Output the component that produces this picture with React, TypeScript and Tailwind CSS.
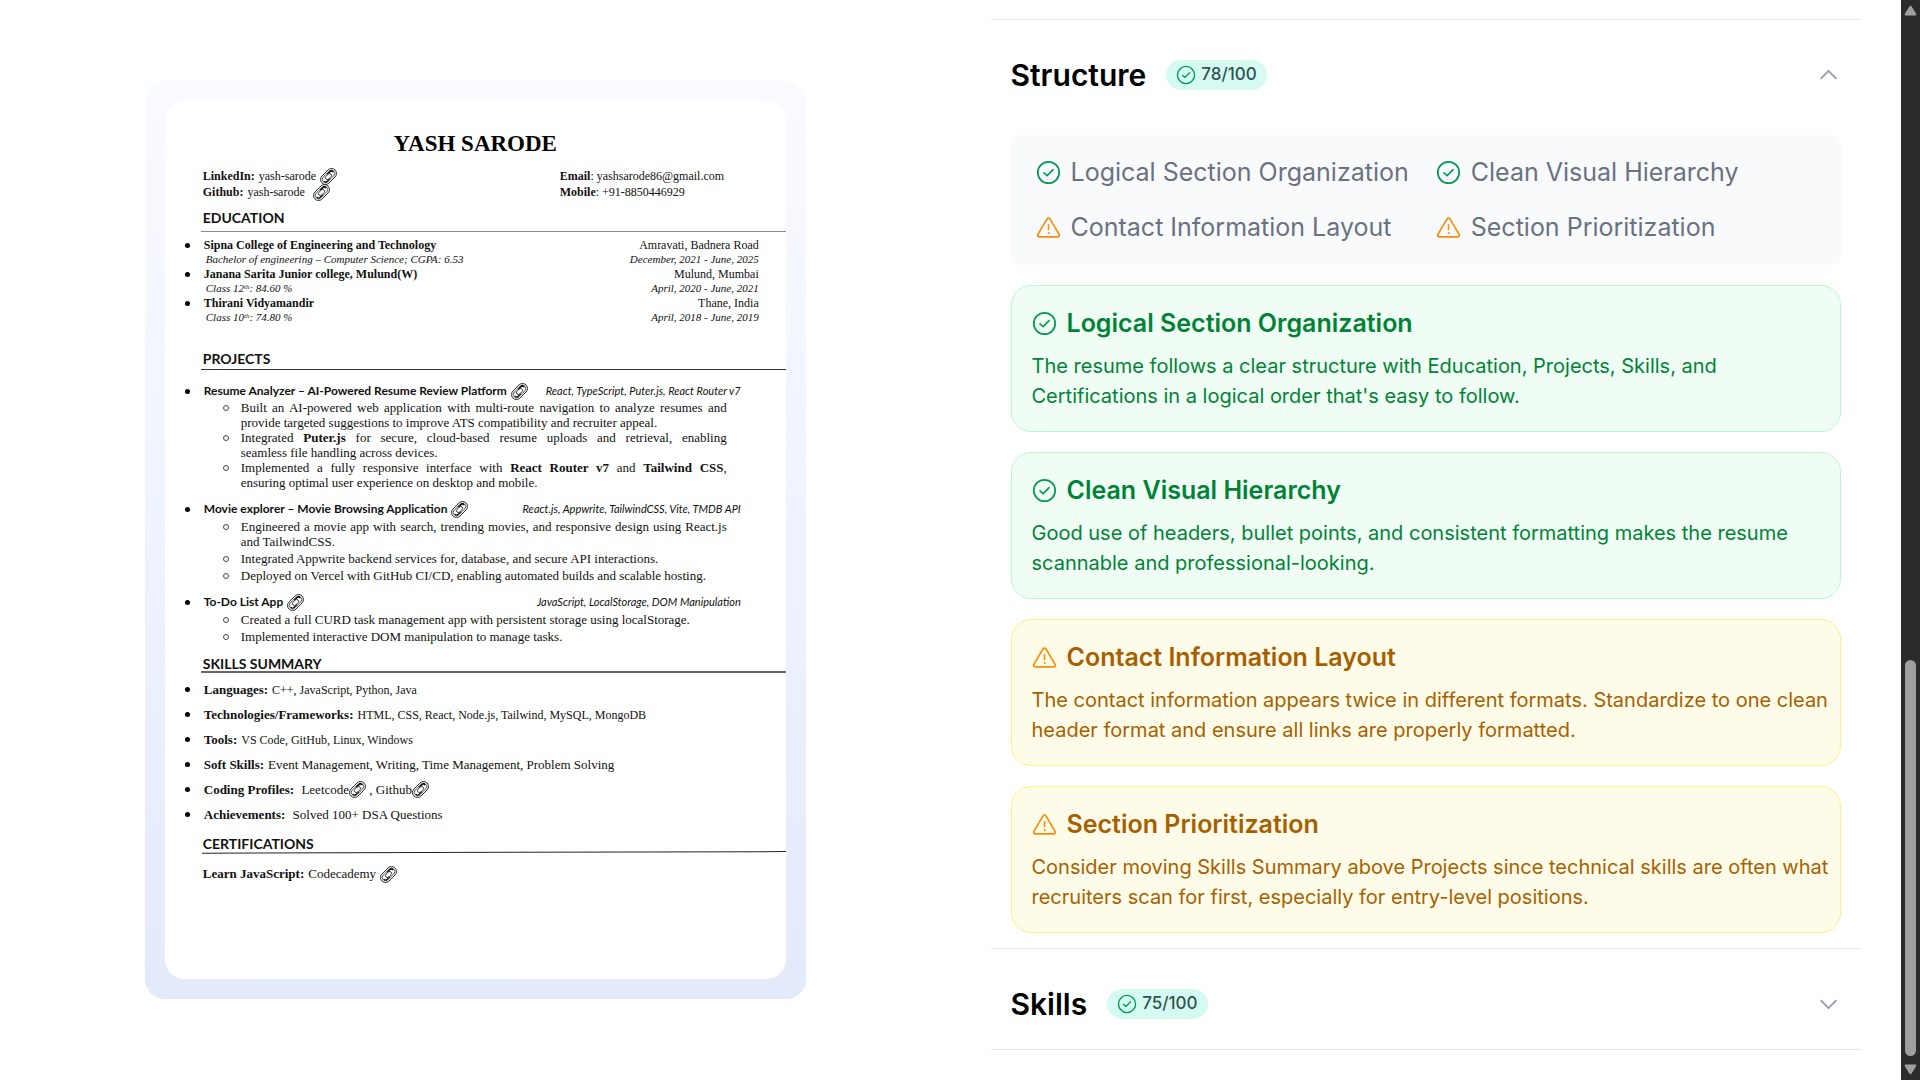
import { Fragment, useState, type ReactNode } from 'react';

function CheckIcon({ className }: { className: string }) {
  return (
    <svg viewBox="0 0 25 25" fill="none" stroke="#009a55" strokeLinecap="round" strokeLinejoin="round" className={className} aria-hidden="true">
      <circle cx="12.5" cy="12.5" r="10.7" strokeWidth="1.7" />
      <path d="M8 12.9l3.1 2.7 6-6" strokeWidth="1.6" />
    </svg>
  );
}

function WarningIcon({ className }: { className: string }) {
  return (
    <svg viewBox="0 0 25 25" fill="none" stroke="#fb8c0a" strokeLinecap="round" strokeLinejoin="round" className={className} aria-hidden="true">
      <path d="M10.9 4.1 1.9 19.4c-.7 1.2 0 2.4 1.4 2.4h18.4c1.4 0 2.1-1.2 1.4-2.4L14.1 4.1c-.7-1.3-2.5-1.3-3.2 0Z" strokeWidth="1.7" />
      <path d="M12.5 9.8v4.8" strokeWidth="1.6" />
      <circle cx="12.5" cy="18.1" r=".5" fill="#fb8c0a" strokeWidth="1" />
    </svg>
  );
}

function Chevron({ open }: { open: boolean }) {
  return (
    <svg viewBox="0 0 25 25" fill="none" stroke="#98a2b3" strokeWidth="2" strokeLinecap="round" strokeLinejoin="round" className="size-[25px] shrink-0" aria-hidden="true">
      <path d={open ? 'M5.2 15.2l7.3-7.3 7.3 7.3' : 'M5.2 8.8l7.3 7.3 7.3-7.3'} />
    </svg>
  );
}

function ClipIcon() {
  return (
    <svg viewBox="0 0 24 24" className="size-[17px] shrink-0" fill="none" stroke="#111" aria-hidden="true">
      <g transform="rotate(-45 12 12)">
        <rect x="-1" y="5" width="26" height="14" rx="7" fill="#fff" strokeWidth="1.2" />
        <rect x="1.6" y="7.4" width="20.8" height="9.2" rx="4.6" strokeWidth="1" />
        <path d="M13 8.5h5c2.4 0 3.4 1.6 3.4 3.5" strokeWidth="2.4" />
        <path d="M11 15.5H6c-2.4 0-3.4-1.6-3.4-3.5" strokeWidth="1.6" />
        <rect x="7" y="9.3" width="10" height="5.4" rx="2.7" fill="#fff" strokeWidth="1.1" />
      </g>
    </svg>
  );
}

function DocLink({ label }: { label: string }) {
  return (
    <a href="#" aria-label={label} className="inline-flex shrink-0 align-middle">
      <ClipIcon />
    </a>
  );
}

function Dot() {
  return <span className="size-[5px] shrink-0 rounded-full bg-black" />;
}

const education = [
  { name: 'Sipna College of Engineering and Technology', place: 'Amravati, Badnera Road', detail: 'Bachelor of engineering – Computer Science; CGPA: 6.53', dates: 'December, 2021 - June, 2025' },
  { name: 'Janana Sarita Junior college, Mulund(W)', place: 'Mulund, Mumbai', detail: <>Class 12<sup className="text-[7px]">th</sup>: 84.60 %</>, dates: 'April, 2020 - June, 2021' },
  { name: 'Thirani Vidyamandir', place: 'Thane, India', detail: <>Class 10<sup className="text-[7px]">th</sup>: 74.80 %</>, dates: 'April, 2018 - June, 2019' },
];

type Line = { text: ReactNode; justify?: boolean };
type Project = { title: string; stack: string; tight: boolean; points: Line[][] };

const projects: Project[] = [
  {
    title: 'Resume Analyzer – AI-Powered Resume Review Platform',
    stack: 'React, TypeScript, Puter.js, React Router v7',
    tight: true,
    points: [
      [
        { text: 'Built an AI-powered web application with multi-route navigation to analyze resumes and', justify: true },
        { text: 'provide targeted suggestions to improve ATS compatibility and recruiter appeal.' },
      ],
      [
        { text: <>Integrated <b>Puter.js</b> for secure, cloud-based resume uploads and retrieval, enabling</>, justify: true },
        { text: 'seamless file handling across devices.' },
      ],
      [
        { text: <>Implemented a fully responsive interface with <b>React Router v7</b> and <b>Tailwind CSS</b>,</>, justify: true },
        { text: 'ensuring optimal user experience on desktop and mobile.' },
      ],
    ],
  },
  {
    title: 'Movie explorer – Movie Browsing Application',
    stack: 'React.js, Appwrite, TailwindCSS, Vite, TMDB API',
    tight: false,
    points: [
      [
        { text: 'Engineered a movie app with search, trending movies, and responsive design using React.js', justify: true },
        { text: 'and TailwindCSS.' },
      ],
      [{ text: 'Integrated Appwrite backend services for, database, and secure API interactions.' }],
      [{ text: 'Deployed on Vercel with GitHub CI/CD, enabling automated builds and scalable hosting.' }],
    ],
  },
  {
    title: 'To-Do List App',
    stack: 'JavaScript, LocalStorage, DOM Manipulation',
    tight: false,
    points: [
      [{ text: 'Created a full CURD task management app with persistent storage using localStorage.' }],
      [{ text: 'Implemented interactive DOM manipulation to manage tasks.' }],
    ],
  },
];

const skills: { label: string; value: ReactNode; small?: boolean }[] = [
  { label: 'Languages:', value: 'C++, JavaScript, Python, Java', small: true },
  { label: 'Technologies/Frameworks:', value: 'HTML, CSS, React, Node.js, Tailwind, MySQL, MongoDB', small: true },
  { label: 'Tools:', value: 'VS Code, GitHub, Linux, Windows', small: true },
  { label: 'Soft Skills:', value: 'Event Management, Writing, Time Management, Problem Solving' },
  { label: 'Coding Profiles:', value: <>&nbsp;Leetcode<DocLink label="Leetcode profile" /> , Github<DocLink label="Github profile" /></> },
  { label: 'Achievements:', value: <>&nbsp;Solved 100+ DSA Questions</> },
];

function DocHeading({ children }: { children: string }) {
  return <h3 className="pl-[38px] font-['Lato',sans-serif] text-sm leading-4 font-bold">{children}</h3>;
}

function ResumePaper() {
  return (
    <article className="aspect-[621/878] h-full overflow-hidden rounded-[20px] bg-white pt-[27px] font-['Liberation_Serif',serif] text-[13px] whitespace-nowrap text-[#111]">
      <h2 className="text-center text-[23px] leading-8 font-bold text-black">YASH SARODE</h2>
      <div className="mt-2 grid grid-cols-[357px_1fr] pl-[38px] text-xs leading-4">
        <p className="flex h-4 items-center gap-1"><b>LinkedIn:</b> yash-sarode <DocLink label="LinkedIn" /></p>
        <p><b>Email</b>: yashsarode86@gmail.com</p>
        <p className="flex h-4 items-center gap-1"><b>Github:</b> yash-sarode <span className="ml-1 inline-flex"><DocLink label="Github" /></span></p>
        <p><b>Mobile</b>: +91-8850446929</p>
      </div>

      <div className="mt-2.5"><DocHeading>EDUCATION</DocHeading></div>
      <hr className="mt-[5px] ml-9 border-[#8a8a8a]" />
      <ul className="mt-1.5 pr-[27px] pl-5">
        {education.map((e) => (
          <li key={e.name}>
            <div className="flex h-3.5 items-center text-xs leading-[14px]">
              <Dot />
              <b className="ml-3.5 flex-1">{e.name}</b>
              <span>{e.place}</span>
            </div>
            <div className="flex h-[15px] items-center pl-[21px] text-[11px] leading-[15px] italic">
              <span className="flex-1">{e.detail}</span>
              <span>{e.dates}</span>
            </div>
          </li>
        ))}
      </ul>

      <div className="mt-[26px]"><DocHeading>PROJECTS</DocHeading></div>
      <hr className="mt-0.5 ml-9 border-[#333]" />
      <ul className="mt-3 flex flex-col gap-2.5 pl-5">
        {projects.map((p) => (
          <li key={p.title}>
            <div className="flex h-[18px] items-center pr-[45px] font-['Lato',sans-serif] text-xs">
              <Dot />
              <b className="mr-1 ml-3.5">{p.title}</b>
              <DocLink label={p.title} />
              <i className="ml-auto text-[11px]">{p.stack}</i>
            </div>
            <ul className={p.tight ? 'flex flex-col pr-[59px] pl-[38px]' : 'mt-px flex flex-col gap-0.5 pr-[59px] pl-[38px]'}>
              {p.points.map((lines, i) => (
                <li key={i} className="flex leading-[15px]">
                  <span className="mt-[5px] mr-3 size-1.5 shrink-0 rounded-full border border-[#444]" />
                  <div className="flex-1">
                    {lines.map((line, j) => (
                      <p key={j} className={line.justify ? '[text-align-last:justify] whitespace-normal' : ''}>{line.text}</p>
                    ))}
                  </div>
                </li>
              ))}
            </ul>
          </li>
        ))}
      </ul>

      <div className="mt-3"><DocHeading>SKILLS SUMMARY</DocHeading></div>
      <hr className="-mt-px ml-9 border-t-2 border-[#666]" />
      <ul className="mt-1 pl-5">
        {skills.map((s) => (
          <li key={s.label} className="flex h-[25px] items-center">
            <Dot />
            <b className="mr-1 ml-3.5">{s.label}</b>
            <span className={s.small ? 'text-xs' : 'flex items-center whitespace-pre'}>{s.value}</span>
          </li>
        ))}
      </ul>

      <div className="mt-[9px]"><DocHeading>CERTIFICATIONS</DocHeading></div>
      <svg viewBox="0 0 584 3" preserveAspectRatio="none" className="-mt-px ml-[37px] block h-[3px] w-full" aria-hidden="true">
        <path d="M0 2.2 584 .5" stroke="#222" strokeWidth="1" />
      </svg>
      <p className="mt-3 flex h-4 items-center gap-1 pl-[38px] leading-4"><b>Learn JavaScript:</b> Codecademy <DocLink label="Certificate" /></p>
    </article>
  );
}

type Tip = { type: 'good' | 'improve'; title: string; lines: string[] };

const structureTips: Tip[] = [
  { type: 'good', title: 'Logical Section Organization', lines: ['The resume follows a clear structure with Education, Projects, Skills, and', "Certifications in a logical order that's easy to follow."] },
  { type: 'good', title: 'Clean Visual Hierarchy', lines: ['Good use of headers, bullet points, and consistent formatting makes the resume', 'scannable and professional-looking.'] },
  { type: 'improve', title: 'Contact Information Layout', lines: ['The contact information appears twice in different formats. Standardize to one clean', 'header format and ensure all links are properly formatted.'] },
  { type: 'improve', title: 'Section Prioritization', lines: ['Consider moving Skills Summary above Projects since technical skills are often what', 'recruiters scan for first, especially for entry-level positions.'] },
];

function TipIcon({ type }: { type: Tip['type'] }) {
  return type === 'good' ? <CheckIcon className="size-[25px] shrink-0" /> : <WarningIcon className="size-[25px] shrink-0" />;
}

function TipDetails({ tips }: { tips: Tip[] }) {
  return (
    <div className="flex flex-col gap-5 px-5 py-[15px]">
      <ul className="grid grid-cols-2 gap-5 rounded-[10px] bg-gray-50 px-[25px] py-5">
        {tips.map((t) => (
          <li key={t.title} className="flex items-center gap-2.5">
            <TipIcon type={t.type} />
            <span className="text-[25px] leading-[35px] whitespace-nowrap text-gray-500">{t.title}</span>
          </li>
        ))}
      </ul>
      {tips.map((t) => (
        <section
          key={t.title}
          className={
            t.type === 'good'
              ? 'rounded-[20px] border border-green-200 bg-green-50 py-5 pr-2 pl-5 text-green-700'
              : 'rounded-[20px] border border-yellow-200 bg-yellow-50 py-5 pr-2 pl-5 text-yellow-700'
          }
        >
          <h3 className="flex items-center gap-2.5 text-[25px] leading-[35px] font-semibold">
            <TipIcon type={t.type} />
            {t.title}
          </h3>
          <p className="mt-2.5 text-xl leading-[30px]">
            {t.lines.map((line, i) => (
              <Fragment key={line}>
                {i > 0 && <br />}
                {line}
              </Fragment>
            ))}
          </p>
        </section>
      ))}
    </div>
  );
}

function AccordionItem({ title, score, initiallyOpen, children }: { title: string; score: number; initiallyOpen: boolean; children?: ReactNode }) {
  const [open, setOpen] = useState(initiallyOpen);
  return (
    <div className="border-b border-gray-200">
      <h2>
        <button type="button" aria-expanded={open} onClick={() => setOpen(!open)} className="flex w-full cursor-pointer items-center px-5 pt-[35px] pb-[25px] text-left">
          <span className="text-3xl leading-10 font-semibold text-black">{title}</span>
          <span className="ml-5 flex h-[30px] items-center gap-[5px] rounded-full bg-[#d5faf1] px-2.5">
            <CheckIcon className="size-5 shrink-0" />
            <span className="text-[17px] font-medium text-[#2f5350]">{score}/100</span>
          </span>
          <span className="ml-auto"><Chevron open={open} /></span>
        </button>
      </h2>
      {open && children}
    </div>
  );
}

function ScrollTrack() {
  return (
    <div className="flex w-[19px] shrink-0 flex-col items-center bg-[#2b2b2b] py-[5px]" aria-hidden="true">
      <svg viewBox="0 0 13 11" className="h-[11px] w-[13px]"><path d="M5.4 1.4 1 8.6C.4 9.8.7 10.4 1.8 10.4h9.4c1.1 0 1.4-.6.8-1.8L7.6 1.4c-.6-.8-1.6-.8-2.2 0Z" fill="#9f9f9f" /></svg>
      <div className="grow" />
      <div className="mb-2 h-[37%] w-[11px] rounded-full bg-[#9f9f9f]" />
      <svg viewBox="0 0 13 11" className="h-[11px] w-[13px]"><path d="M5.4 9.6 1 2.4C.4 1.2.7.6 1.8.6h9.4c1.1 0 1.4.6.8 1.8L7.6 9.6c-.6.8-1.6.8-2.2 0Z" fill="#9f9f9f" /></svg>
    </div>
  );
}

export default function App() {
  return (
    <div className="flex h-screen overflow-hidden bg-white font-['Inter',sans-serif]">
      <main className="flex min-w-0 flex-1">
        <div className="flex w-1/2 items-center justify-center">
          <div className="h-[85vh] rounded-[20px] bg-linear-to-b from-[#fafbff] to-[#e3eafb] p-5">
            <ResumePaper />
          </div>
        </div>
        <div className="w-1/2 px-10 pt-[19px]">
          <div className="border-t border-gray-200">
            <AccordionItem title="Structure" score={78} initiallyOpen>
              <TipDetails tips={structureTips} />
            </AccordionItem>
            <AccordionItem title="Skills" score={75} initiallyOpen={false} />
          </div>
        </div>
      </main>
      <ScrollTrack />
    </div>
  );
}
